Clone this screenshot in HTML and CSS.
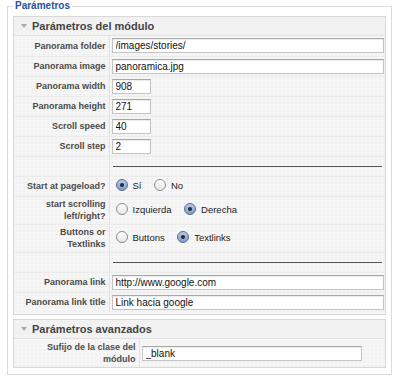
FILE: index.html
```html
<!DOCTYPE html>
<html lang="es">

<head>
  <meta charset="UTF-8" />
  <title>Parámetros</title>
  <link rel="stylesheet" href="styles.css">
</head>

<body>
  <fieldset class="params">
    <legend>Parámetros</legend>

    <div class="panel">
      <h3 class="panel-title"><span class="arrow"></span>Parámetros del módulo</h3>
      <table class="paramlist">
        <tr>
          <td class="key">Panorama folder</td>
          <td><input class="text wide" type="text" value="/images/stories/" /></td>
        </tr>
        <tr>
          <td class="key">Panorama image</td>
          <td><input class="text wide" type="text" value="panoramica.jpg" /></td>
        </tr>
        <tr>
          <td class="key">Panorama width</td>
          <td><input class="text short" type="text" value="908" /></td>
        </tr>
        <tr>
          <td class="key">Panorama height</td>
          <td><input class="text short" type="text" value="271" /></td>
        </tr>
        <tr>
          <td class="key">Scroll speed</td>
          <td><input class="text short" type="text" value="40" /></td>
        </tr>
        <tr>
          <td class="key">Scroll step</td>
          <td><input class="text short" type="text" value="2" /></td>
        </tr>
        <tr class="spacer">
          <td class="key"></td>
          <td><hr /></td>
        </tr>
        <tr>
          <td class="key">Start at pageload?</td>
          <td>
            <label class="opt"><input type="radio" name="start" checked />Sí</label>
            <label class="opt"><input type="radio" name="start" />No</label>
          </td>
        </tr>
        <tr class="tall">
          <td class="key">start scrolling<br />left/right?</td>
          <td>
            <label class="opt"><input type="radio" name="dir" />Izquierda</label>
            <label class="opt"><input type="radio" name="dir" checked />Derecha</label>
          </td>
        </tr>
        <tr class="tall">
          <td class="key">Buttons or<br />Textlinks</td>
          <td>
            <label class="opt"><input type="radio" name="nav" />Buttons</label>
            <label class="opt"><input type="radio" name="nav" checked />Textlinks</label>
          </td>
        </tr>
        <tr class="spacer">
          <td class="key"></td>
          <td><hr /></td>
        </tr>
        <tr>
          <td class="key">Panorama link</td>
          <td><input class="text wide" type="text" value="http://www.google.com" /></td>
        </tr>
        <tr class="last">
          <td class="key">Panorama link title</td>
          <td><input class="text wide" type="text" value="Link hacia google" /></td>
        </tr>
      </table>
    </div>

    <div class="panel advanced">
      <h3 class="panel-title"><span class="arrow"></span>Parámetros avanzados</h3>
      <table class="paramlist">
        <tr class="tall last">
          <td class="key">Sufijo de la clase del<br />módulo</td>
          <td><input class="text suffix" type="text" value="_blank" /></td>
        </tr>
      </table>
    </div>
  </fieldset>
</body>

</html>
```

FILE: styles.css
```css
* {
  box-sizing: border-box;
}

body {
  margin: 0;
  padding: 0 8px 0 7px;
  background: #fff;
  font-family: 'Liberation Sans', Arial, sans-serif;
  color: #333;
}

.params {
  margin: 0;
  width: 385px;
  border: 1px solid #dcdcdc;
  padding: 4px 5px 6px 5px;
}

.params legend {
  padding: 0 2px;
  font-size: 10px;
  font-weight: bold;
  color: #24539f;
  line-height: 12px;
}

.panel {
  border: 1px solid #d8d8d8;
  background-color: #f6f6f6;
  background-image: radial-gradient(#e9e9e9 0.6px, transparent 0.8px);
  background-size: 4px 4px;
  padding-bottom: 2px;
}

.panel.advanced {
  margin-top: 4px;
  padding-bottom: 0;
}

.panel-title {
  margin: 0;
  height: 19px;
  padding-left: 7px;
  display: flex;
  align-items: center;
  gap: 5px;
  font-size: 11px;
  font-weight: bold;
  color: #444;
  border-bottom: 1px solid #e2e2e2;
  background-color: #f2f2f2;
}

.arrow {
  width: 0;
  height: 0;
  border-left: 3.5px solid transparent;
  border-right: 3.5px solid transparent;
  border-top: 4px solid #aaa;
}

.paramlist {
  width: 100%;
  border-collapse: collapse;
  table-layout: fixed;
}

.paramlist td {
  height: 20px;
  padding: 0 0 0 2px;
  border-bottom: 1px solid #ebebeb;
  vertical-align: middle;
}

.paramlist tr.last td {
  border-bottom: none;
}

.paramlist td.key {
  width: 95px;
  padding: 0 3px 0 0;
  text-align: right;
  font-size: 9px;
  font-weight: bold;
  line-height: 12px;
  color: #4a4a4a;
  border-right: 1px solid #e2e2e2;
}

.advanced .paramlist td.key {
  width: 125px;
}

.paramlist tr.tall td {
  height: 28px;
}

.text {
  display: block;
  height: 15px;
  margin: 0;
  padding: 0 3px;
  font-family: 'Liberation Sans', Arial, sans-serif;
  font-size: 10px;
  color: #111;
  background: #fff;
  border: 1px solid #c4c4c4;
  border-top-color: #a8a8a8;
  box-shadow: inset 0 1px 1px rgba(0, 0, 0, 0.08);
}

.text.wide {
  width: 272px;
}

.text.short {
  width: 39px;
}

.text.suffix {
  width: 220px;
}

.spacer hr {
  margin: 0 3px 0 1px;
  border: none;
  border-top: 1px solid #555;
}

.opt {
  display: inline-flex;
  align-items: center;
  margin: 0 4px 0 4px;
  font-size: 9.5px;
  color: #222;
}

.opt input {
  appearance: none;
  width: 12px;
  height: 12px;
  margin: 0 5px 0 0;
  border-radius: 50%;
  border: 1px solid #8c8c8c;
  background: linear-gradient(#fff, #e6e6e6);
  position: relative;
}

.opt input:checked {
  border-color: #5a6f8a;
  background: linear-gradient(#b8cbe6, #7f9fcc);
}

.opt input:checked::after {
  content: "";
  position: absolute;
  left: 3px;
  top: 3px;
  width: 4px;
  height: 4px;
  border-radius: 50%;
  background: #1e2a3a;
}
```
